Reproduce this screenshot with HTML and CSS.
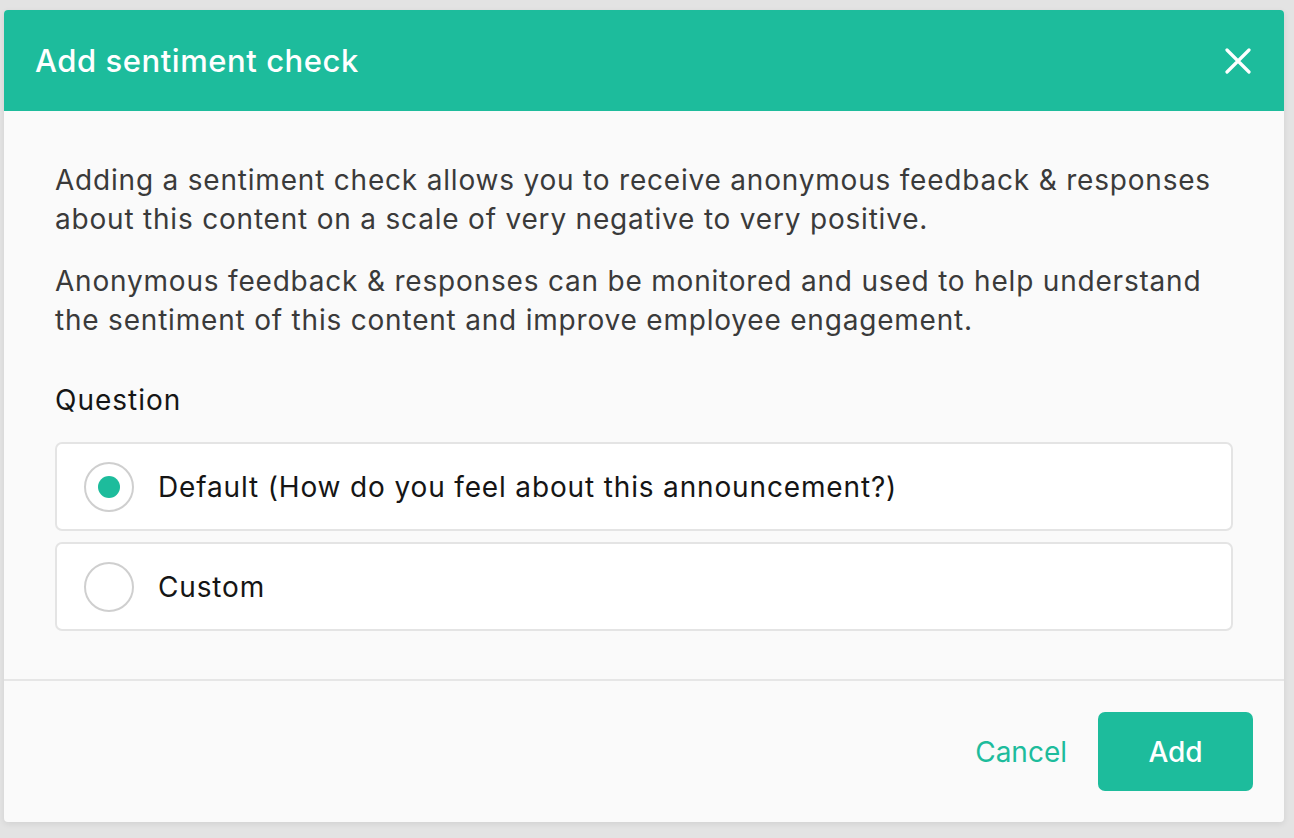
FILE: index.html
```html
<!DOCTYPE html>
<html>
<head>
<meta charset="utf-8">
<link rel="stylesheet" href="styles.css">
</head>
<body>
<div class="modal">
  <div class="header">
    <h1 class="title">Add sentiment check</h1>
    <button class="close" aria-label="Close">
      <svg width="26" height="26" viewBox="0 0 26 26"><path d="M2 2 L24 24 M24 2 L2 24" stroke="#fff" stroke-width="3.2" stroke-linecap="round" fill="none"/></svg>
    </button>
  </div>
  <div class="body">
    <p class="text">Adding a sentiment check allows you to receive anonymous feedback &amp; responses about this content on a scale of very negative to very positive.</p>
    <p class="text">Anonymous feedback &amp; responses can be monitored and used to help understand the sentiment of this content and improve employee engagement.</p>
    <div class="label">Question</div>
    <div class="options">
      <label class="option">
        <span class="radio checked"><span class="dot"></span></span>
        <span class="opt-text">Default (How do you feel about this announcement?)</span>
      </label>
      <label class="option">
        <span class="radio"></span>
        <span class="opt-text">Custom</span>
      </label>
    </div>
  </div>
  <div class="footer">
    <button class="cancel">Cancel</button>
    <button class="add">Add</button>
  </div>
</div>
</body>
</html>
```
FILE: styles.css
```css
html, body {
  margin: 0;
  padding: 0;
}
body {
  background: #e3e3e3;
  font-family: Inter, "Noto Sans", sans-serif;
  width: 1294px;
  height: 838px;
  overflow: hidden;
}
.modal {
  margin: 10px 0 0 4px;
  width: 1280px;
  height: 812px;
  background: #fafafa;
  border-radius: 4px;
  overflow: hidden;
  box-shadow: 0 2px 6px rgba(0,0,0,0.08);
  display: flex;
  flex-direction: column;
}
.header {
  height: 101px;
  background: #1dbc9c;
  display: flex;
  align-items: center;
  justify-content: space-between;
  padding: 0 33px 0 31px;
  box-sizing: border-box;
  flex-shrink: 0;
}
.title {
  margin: 0;
  color: #fff;
  font-size: 31px;
  font-weight: 500;
  letter-spacing: 0.55px;
}
.close {
  background: none;
  border: 0;
  padding: 0;
  width: 26px;
  height: 26px;
  display: flex;
  cursor: pointer;
}
.body {
  padding: 50px 51px 48px 51px;
  border-bottom: 2px solid #e6e6e6;
}
.text {
  margin: 0 0 23px 0;
  font-size: 28px;
  line-height: 39px;
  color: #3a3a3a;
  letter-spacing: 0.8px;
}
.label {
  margin-top: 41px;
  font-size: 28px;
  line-height: 39px;
  color: #151515;
  letter-spacing: 1px;
}
.options {
  margin-top: 22px;
  display: flex;
  flex-direction: column;
  gap: 11px;
}
.option {
  height: 89px;
  box-sizing: border-box;
  background: #fff;
  border: 2px solid #e4e4e4;
  border-radius: 7px;
  display: flex;
  align-items: center;
  padding-left: 27px;
  gap: 24px;
}
.radio {
  width: 50px;
  height: 50px;
  box-sizing: border-box;
  border: 2px solid #cfcfcf;
  border-radius: 50%;
  display: flex;
  align-items: center;
  justify-content: center;
  background: #fff;
}
.dot {
  width: 22px;
  height: 22px;
  border-radius: 50%;
  background: #1dbc9c;
}
.opt-text {
  font-size: 28px;
  color: #151515;
  letter-spacing: 0.85px;
}
.footer {
  flex: 1;
  display: flex;
  align-items: center;
  justify-content: flex-end;
  padding: 0 31px 0 0;
  gap: 31px;
}
.cancel {
  background: none;
  border: 0;
  padding: 0;
  font-family: inherit;
  font-size: 28px;
  color: #1dbc9c;
  cursor: pointer;
}
.add {
  width: 155px;
  height: 79px;
  background: #1dbc9c;
  border: 0;
  border-radius: 7px;
  color: #fff;
  font-family: inherit;
  font-size: 28px;
  font-weight: 500;
  cursor: pointer;
}
```
